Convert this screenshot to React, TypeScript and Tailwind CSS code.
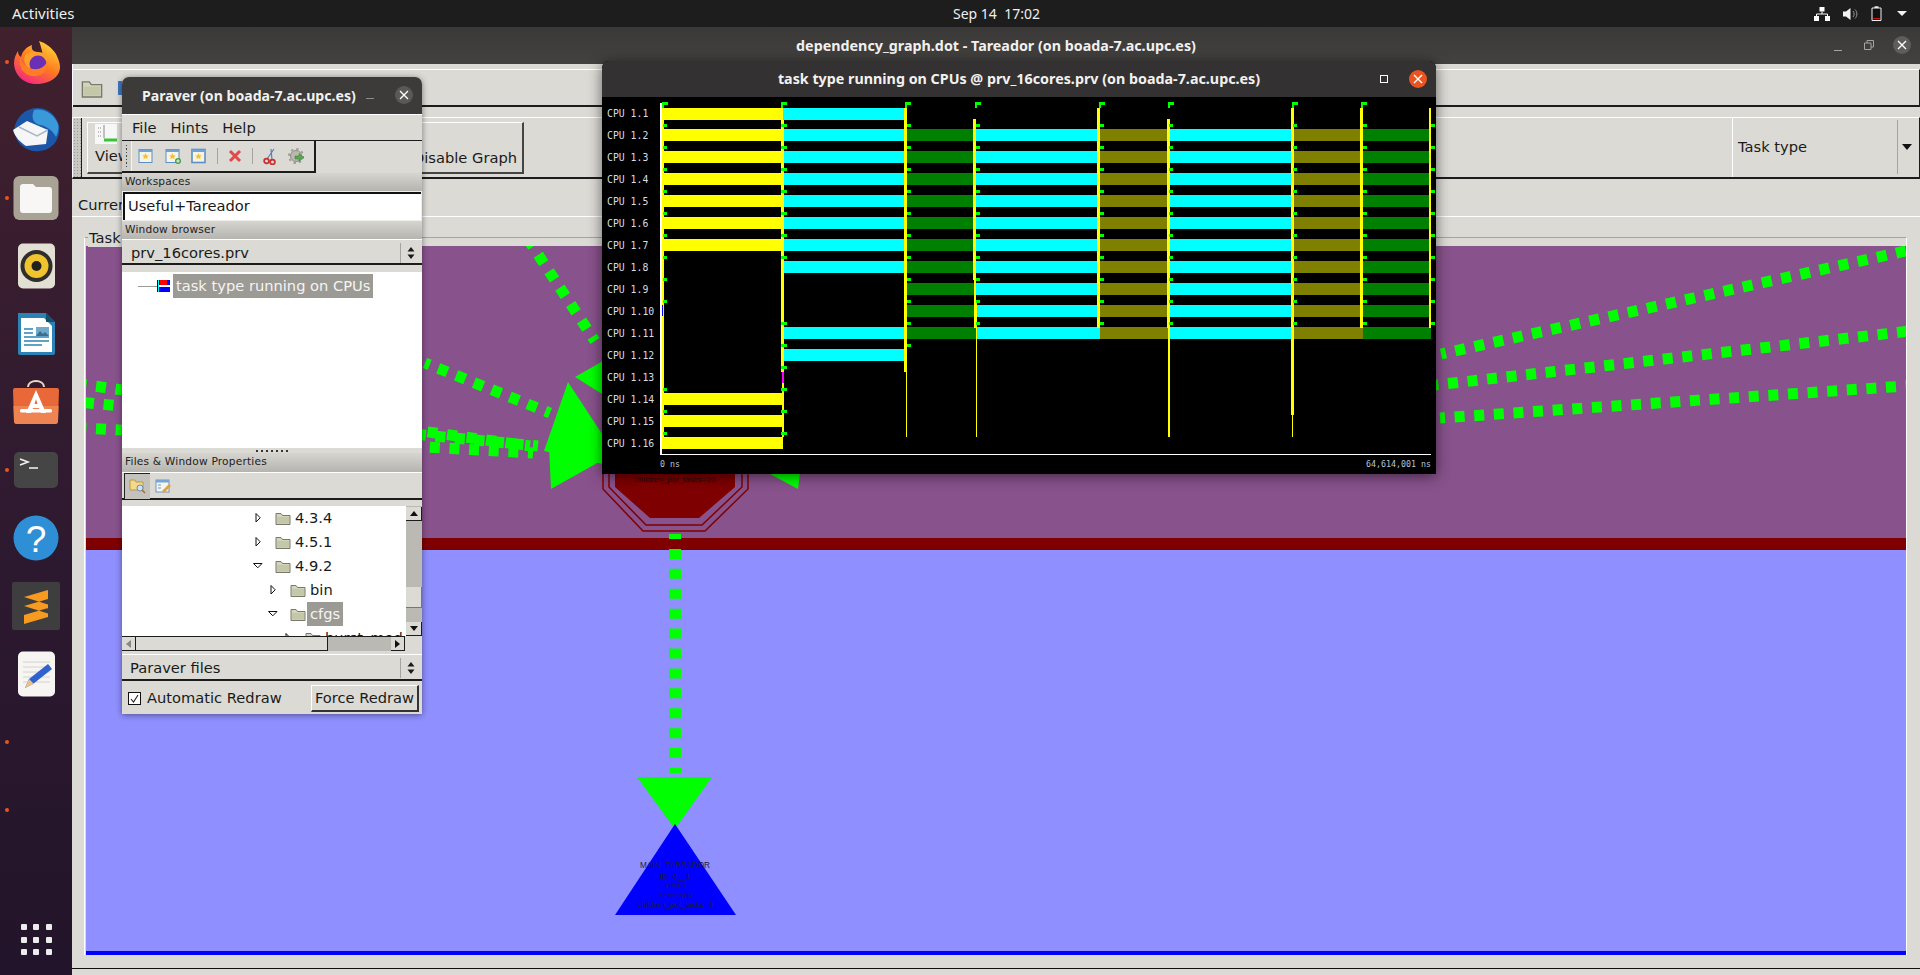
import React from "react";

// ---------- trace data ----------
const YEL = "#ffff00";
const CYA = "#00ffff";
const GRN = "#008000";
const OLV = "#808000";
const FLAG = "#00ff00";

const phases: [number, number, string][] = [
  [662, 783, YEL],
  [783, 905, CYA],
  [907, 974, GRN],
  [976, 1098, CYA],
  [1100, 1167, OLV],
  [1169, 1291, CYA],
  [1293, 1361, OLV],
  [1363, 1430, GRN],
];

// which phases each CPU row has
const rowPhases: number[][] = [
  [0, 1],
  [0, 1, 2, 3, 4, 5, 6, 7],
  [0, 1, 2, 3, 4, 5, 6, 7],
  [0, 1, 2, 3, 4, 5, 6, 7],
  [0, 1, 2, 3, 4, 5, 6, 7],
  [0, 1, 2, 3, 4, 5, 6, 7],
  [0, 1, 2, 3, 4, 5, 6, 7],
  [1, 2, 3, 4, 5, 6, 7],
  [2, 3, 4, 5, 6, 7],
  [2, 3, 4, 5, 6, 7],
  [1, 2, 3, 4, 5, 6, 7],
  [1],
  [],
  [0],
  [0],
  [0],
];

const rowTop = (i: number) => (i === 0 ? 108 : 129 + 22 * (i - 1));

// x, width, from, to
const ticks: [number, number, number, number, string][] = [
  [662, 1.5, 120, 437, YEL],
  [662, 1, 305, 316, "#0000ff"],
  [781, 3, 120, 372, YEL],
  [782, 2, 372, 383, "#ff00ff"],
  [782, 1.5, 383, 437, YEL],
  [904, 3, 108, 372, YEL],
  [906, 1, 372, 437, YEL],
  [973, 3, 119, 280, YEL],
  [974, 1.5, 280, 328, YEL],
  [976, 1, 300, 437, YEL],
  [1097, 3, 108, 328, YEL],
  [1167, 3, 119, 328, YEL],
  [1168, 1.5, 328, 437, YEL],
  [1291, 3, 108, 415, YEL],
  [1292, 1, 415, 437, YEL],
  [1360, 3, 108, 328, YEL],
  [1429, 2, 108, 328, YEL],
];

const flagCols = [663, 781, 907, 976, 1100, 1169, 1293, 1363, 1431];
const flagTopCols = [662, 781, 905, 975, 1099, 1168, 1292, 1361];

function hasFlag(col: number, row: number) {
  if (col === 0) return row < 10 || row > 12;
  if (col === 1) return row !== 8 && row !== 9;
  if (col === 2) return row <= 11;
  return row <= 10;
}

function TraceChart() {
  return (
    <svg width="776" height="359" viewBox="660 97 776 359" className="block" shapeRendering="crispEdges">
      {rowPhases.map((list, r) =>
        list.map((p) => {
          const [a, b, c] = phases[p];
          const start = r >= 2 && r <= 6 && p === 0 ? 661 : a;
          // CPU 1.11 runs on without the gaps
          let end = b;
          if (r === 10 && p >= 2) end = p === 7 ? 1431 : phases[p + 1][0];
          return <rect key={r + "-" + p} x={start} y={rowTop(r)} width={end - start} height={12} fill={c} />;
        })
      )}
      {ticks.map(([x, w, a, b, c], i) => (
        <rect key={i} x={x} y={a} width={w} height={b - a} fill={c} />
      ))}
      {flagTopCols.map((x) => (
        <path key={x} d={`M${x} 108v-6h6v3h-4v3z`} fill={FLAG} />
      ))}
      {flagCols.map((x, c) =>
        rowPhases.map((_, r) =>
          r > 0 && hasFlag(c, r) ? (
            <rect key={c + "_" + r} x={x} y={124 + 22 * (r - 1)} width={c === 1 ? 6 : 4} height={3} fill={FLAG} />
          ) : null
        )
      )}
      <rect x={660} y={103} width={1.5} height={351} fill="#fff" />
      <rect x={660} y={454} width={771} height={1} fill="#fff" />
    </svg>
  );
}

function TraceWindow() {
  const labels = Array.from({ length: 16 }, (_, i) => "CPU 1." + (i + 1));
  return (
    <div className="absolute left-[602px] top-[61px] z-20 flex h-[413px] w-[834px] flex-col overflow-hidden rounded-t-[7px] bg-black shadow-[0_2px_14px_rgba(0,0,0,0.55)]">
      <div className="relative flex h-[36px] items-center justify-center bg-[#333131] font-['Noto_Sans',sans-serif] text-[14.3px] font-bold text-[#f2f1f0]">
        <span>task type running on CPUs @ prv_16cores.prv (on boada-7.ac.upc.es)</span>
        <div className="absolute right-[9px] top-[9px] flex items-center gap-[21px]">
          <div className="h-[8px] w-[8px] border border-white" />
          <div className="flex h-[18px] w-[18px] items-center justify-center rounded-full bg-[#e95420]">
            <svg width="10" height="10" viewBox="0 0 10 10">
              <path d="M1 1l8 8M9 1l-8 8" stroke="#fff" strokeWidth="1.4" />
            </svg>
          </div>
        </div>
      </div>
      <div className="flex">
        <div className="flex w-[58px] flex-col pl-[5px] pt-[6px] font-['DejaVu_Sans_Mono',monospace] text-[9.8px] text-[#d5dde6]">
          {labels.map((l) => (
            <div key={l} className="flex h-[22px] items-center whitespace-nowrap">
              {l}
            </div>
          ))}
        </div>
        <div className="flex flex-col">
          <TraceChart />
          <div className="flex h-[18px] items-center justify-between pb-[1px] pr-[5px] font-['DejaVu_Sans_Mono',monospace] text-[8.3px] text-[#b9c6d4]">
            <span>0 ns</span>
            <span>64,614,001 ns</span>
          </div>
        </div>
      </div>
    </div>
  );
}

// ---------- dependency graph ----------
type EdgeProps = { x1: number; y1: number; x2: number; y2: number; n: number; before?: number; after?: number; w?: number };

// dotted edge, both ends are centres of a square
function Edge({ x1, y1, x2, y2, n, before = 0, after = 0, w = 11 }: EdgeProps) {
  const dx = (x2 - x1) / n;
  const dy = (y2 - y1) / n;
  const pitch = Math.hypot(dx, dy);
  return (
    <line
      x1={x1 - dx * before}
      y1={y1 - dy * before}
      x2={x2 + dx * after}
      y2={y2 + dy * after}
      stroke="#00ff00"
      strokeWidth={w}
      strokeDasharray={`10 ${pitch - 10}`}
      strokeDashoffset={5}
    />
  );
}

function Graph() {
  return (
    <svg width="1820" height="709" viewBox="86 247 1820 709" className="block">
      <rect x="86" y="247" width="1820" height="292" fill="#88528c" />
      <rect x="86" y="539" width="1820" height="12" fill="#7f0000" />
      <rect x="86" y="551" width="1820" height="401" fill="#8f8fff" />
      <rect x="86" y="952" width="1820" height="4" fill="#0000ff" />

      <g fill="none" stroke="#7f0000" strokeWidth="1.5">
        <path d="M603 440V490L643 532H705L748 490V440" />
        <path d="M609 440V488L646 526H702L742 488V440" />
      </g>
      <path d="M615 440V488L650 519H699L735 488V440Z" fill="#7f0000" />
      <text x="675" y="483" textAnchor="middle" fontSize="8" fill="#2a0a0a" fontFamily="Liberation Sans, sans-serif">
        children_pot_tasks=10
      </text>

      <Edge x1={1441} y1={355} x2={1901} y2={253} n={24} after={1} />
      <Edge x1={1453} y1={384} x2={1902} y2={333} n={23} before={1} after={1} />
      <Edge x1={1440} y1={419} x2={1891} y2={388} n={23} after={1} />
      <Edge x1={541} y1={260} x2={595} y2={342} n={5} before={1} />
      <Edge x1={425} y1={364} x2={550} y2={414} n={7} />
      <Edge x1={101} y1={388} x2={530} y2={447} n={22} before={1} />
      <Edge x1={89} y1={404} x2={538} y2={447} n={23} before={1} />
      <Edge x1={101} y1={430} x2={533} y2={454} n={22} before={1} />
      <Edge x1={675} y1={535} x2={675} y2={774} n={12} w={12} />

      <g fill="#00ff00">
        <polygon points="568,383 544,452 625,470" />
        <polygon points="549,448 551,490 640,440" />
        <polygon points="575,378 610,358 610,400" />
        <polygon points="768,474 798,490 800,474" />
        <polygon points="637,778 712,778 675,830" />
      </g>
      <polygon points="675,825 615,916 736,916" fill="#0000ff" />
      <g textAnchor="middle" fontFamily="Liberation Sans, sans-serif" fill="#1c1c3a">
        <text x="675" y="869" fontSize="8.2">MAIN_TAREADOR</text>
        <text x="675" y="880" fontSize="8">ID=0__1</text>
        <text x="675" y="889" fontSize="7.5">inst=0</text>
        <text x="675" y="899" fontSize="7.5">nesting=0</text>
        <text x="675" y="908" fontSize="8">children_pot_tasks=9</text>
      </g>
    </svg>
  );
}

// ---------- small gtk icons ----------
function Folder({ className = "" }: { className?: string }) {
  return (
    <svg viewBox="0 0 16 16" className={className}>
      <path d="M1 3.5h5l1.5 2H15v9H1z" fill="#d3d5bb" stroke="#77796a" strokeWidth="1" />
      <path d="M2 7h12v6.500H2z" fill="#c4c7a8" />
    </svg>
  );
}

function StarWindow({ plus, boxed }: { plus?: boolean; boxed?: boolean }) {
  return (
    <svg width="16" height="16" viewBox="0 0 16 16">
      <rect x="1" y="1.5" width="13" height="13" fill="#f8f4e4" stroke="#5a8fc9" strokeWidth={boxed ? 1.6 : 1} />
      <rect x="1" y="1.5" width="13" height="2.500" fill="#6fa2d8" />
      <path d="M7.500 5l1 2.200 2.300.2-1.700 1.600.5 2.300-2.100-1.200-2.100 1.200.5-2.300-1.700-1.600 2.300-.2z" fill="#f2c230" />
      {plus && <circle cx="13" cy="13" r="3" fill="#4e9a4e" />}
      {plus && <path d="M13 11.200v3.600M11.200 13h3.600" stroke="#fff" strokeWidth="0.9" />}
    </svg>
  );
}

function Spinner() {
  return (
    <svg width="8" height="14" viewBox="0 0 8 14">
      <path d="M4 1l3.500 4.500h-7zM4 13l3.500-4.500h-7z" fill="#1a1a1a" />
    </svg>
  );
}

function TreeArrow({ open }: { open?: boolean }) {
  return (
    <svg width="12" height="12" viewBox="0 0 12 12" className="shrink-0">
      {open ? (
        <path d="M1.500 3.500h8.500L5.800 7.800z" fill="#fff" stroke="#111" />
      ) : (
        <path d="M4 1.500v8.500l4.200-4.200z" fill="#fff" stroke="#111" />
      )}
    </svg>
  );
}

function HeaderStrip({ text, className }: { text: string; className: string }) {
  return (
    <div className={"flex items-center bg-linear-to-b from-[#d6d5d0] to-[#b5b4af] pl-[3px] text-[10.6px] tracking-[0.2px] text-[#222] " + className}>
      {text}
    </div>
  );
}

function ParaverWindow() {
  return (
    <div className="absolute left-[122px] top-[77px] z-10 flex w-[300px] flex-col overflow-hidden rounded-t-[7px] bg-[#dbdad5] text-[14.67px] text-[#1a1a1a] shadow-[0_1px_6px_rgba(0,0,0,0.45)]">
      <div className="relative flex h-[37px] items-center bg-[#3c3b39] pl-[20px] font-['Noto_Sans',sans-serif] text-[14.1px] font-bold text-[#f2f1f0]">
        Paraver (on boada-7.ac.upc.es)
        <div className="absolute right-[9px] top-[9px] flex h-[18px] w-[18px] items-center justify-center rounded-full bg-[#5a5957]">
          <svg width="10" height="10" viewBox="0 0 10 10">
            <path d="M1 1l8 8M9 1l-8 8" stroke="#fff" strokeWidth="1.3" />
          </svg>
        </div>
        <div className="absolute left-[244px] top-[21px] h-px w-[8px] bg-[#8d8c89]" />
      </div>

      <div className="flex h-[27px] items-center gap-[14px] border-t border-b border-t-white border-b-[#1c1c1c] pl-[10px] pt-[1px]">
        <span>File</span>
        <span>Hints</span>
        <span>Help</span>
      </div>

      <div className="flex h-[32px] w-[194px] items-center border-r-2 border-b-2 border-[#1c1c1c] bg-[#dbdad5]">
        <div className="flex h-full w-[10px] flex-col items-center justify-center gap-[2px] border-r border-[#f5f5f2] bg-[#cfcec9]">
          {[0, 1, 2, 3, 4, 5, 6].map((i) => (
            <div key={i} className="h-[1.5px] w-[1.5px] bg-[#444]" />
          ))}
        </div>
        <div className="ml-[6px] flex items-center">
          <StarWindow />
          <div className="w-[11px]" />
          <StarWindow plus />
          <div className="w-[10px]" />
          <StarWindow boxed />
          <div className="mx-[10px] h-[16px] w-px bg-[#a5a49f]" />
          <svg width="14" height="14" viewBox="0 0 14 14">
            <path d="M2 2l10 10M12 2L2 12" stroke="#e04a4a" strokeWidth="3" />
          </svg>
          <div className="mx-[10px] h-[16px] w-px bg-[#a5a49f]" />
          <svg width="15" height="17" viewBox="0 0 15 17">
            <path d="M4 11L11 1M9 12L8 1" stroke="#5a7fb0" strokeWidth="1.2" />
            <circle cx="3.500" cy="13" r="2.400" fill="none" stroke="#c92f2f" strokeWidth="1.700" />
            <circle cx="9.500" cy="14" r="2.400" fill="none" stroke="#c92f2f" strokeWidth="1.700" />
          </svg>
          <div className="w-[10px]" />
          <svg width="17" height="17" viewBox="0 0 17 17">
            <circle cx="8" cy="8" r="5.500" fill="#b9b9b0" stroke="#8e8e85" />
            <circle cx="8" cy="8" r="7" fill="none" stroke="#a0a097" strokeWidth="2" strokeDasharray="2.500 3" />
            <path d="M7 8h4V5.500l5 4-5 4V11H7z" fill="#58a552" stroke="#3e7d3a" strokeWidth="0.5" />
          </svg>
        </div>
      </div>

      <HeaderStrip text="Workspaces" className="h-[18px]" />
      <div className="h-[30px] bg-[#eeede9] p-px">
        <div className="flex h-full items-center border-t-[2px] border-l-[2px] border-t-[#111] border-l-[#111] bg-white pb-[2px] pl-[3px]">
          Useful+Tareador
        </div>
      </div>
      <HeaderStrip text="Window browser" className="h-[18px]" />
      <div className="flex h-[26px] items-center justify-between border-t border-b-2 border-t-white border-b-[#1c1c1c] pl-[9px] pr-[7px] pt-[2px]">
        <span>prv_16cores.prv</span>
        <div className="flex items-center gap-[6px]">
          <div className="h-[20px] w-px bg-[#a5a49f]" />
          <Spinner />
        </div>
      </div>
      <div className="h-[7px]" />

      <div className="h-[176px] bg-white pt-[2px]">
        <div className="flex h-[24px] items-center pl-[16px]">
          <div className="h-px w-[19px] bg-[#9a9a96]" />
          <svg width="13" height="12" viewBox="0 0 13 12" className="shrink-0" shapeRendering="crispEdges">
            <rect width="13" height="12" fill="#0000ff" />
            <rect width="2" height="12" fill="#00ffff" />
            <rect x="3" y="0" width="7" height="5" fill="#ff0000" />
            <rect x="2" y="5" width="11" height="2" fill="#fff" />
            <rect x="0" y="0" width="1" height="12" fill="#111" />
          </svg>
          <div className="ml-[3px] flex h-full items-center bg-[#9c9a94] px-[3px] whitespace-nowrap text-[#f4f4f2]">
            task type running on CPUs
          </div>
        </div>
      </div>
      <div className="flex h-[5px] items-center justify-center gap-[3px]">
        {[0, 1, 2, 3, 4, 5, 6].map((i) => (
          <div key={i} className="h-[2px] w-[2px] bg-[#333]" />
        ))}
      </div>

      <HeaderStrip text="Files & Window Properties" className="h-[19px] pb-[2px]" />
      <div className="flex h-[28px] items-center border-t border-b-2 border-t-white border-b-[#1c1c1c] pl-[2px]">
        <div className="flex h-[26px] w-[26px] items-center justify-center border-t border-l border-t-[#222] border-l-[#222] bg-[#c3c2bd]">
          <svg width="17" height="16" viewBox="0 0 17 16">
            <path d="M1 2h5l1 2h7v8H1z" fill="#f3d98c" stroke="#b89a4a" />
            <circle cx="11" cy="10" r="3" fill="#cfe3f5" stroke="#6c8cb0" />
            <path d="M13 12l3 3" stroke="#b0672c" strokeWidth="1.5" />
          </svg>
        </div>
        <svg width="17" height="16" viewBox="0 0 17 16" className="ml-[5px]">
          <rect x="1" y="2" width="13" height="12" fill="#f5f5f0" stroke="#6f96c6" />
          <rect x="1" y="2" width="13" height="2.500" fill="#7aa4d6" />
          <path d="M3 7h3M3 10h3" stroke="#6f96c6" />
          <path d="M7 13l7-7 2 2-7 7z" fill="#e2a23c" />
        </svg>
      </div>
      <div className="h-[6px]" />

      <div className="flex h-[130px]">
        <div className="flex-1 overflow-hidden bg-white">
          <div className="flex h-[24px] items-center pl-[130px]">
            <TreeArrow />
            <Folder className="ml-[11px] h-[16px] w-[16px] shrink-0" />
            <span className="ml-[4px]">4.3.4</span>
          </div>
          <div className="flex h-[24px] items-center pl-[130px]">
            <TreeArrow />
            <Folder className="ml-[11px] h-[16px] w-[16px] shrink-0" />
            <span className="ml-[4px]">4.5.1</span>
          </div>
          <div className="flex h-[24px] items-center pl-[130px]">
            <TreeArrow open />
            <Folder className="ml-[11px] h-[16px] w-[16px] shrink-0" />
            <span className="ml-[4px]">4.9.2</span>
          </div>
          <div className="flex h-[24px] items-center pl-[145px]">
            <TreeArrow />
            <Folder className="ml-[11px] h-[16px] w-[16px] shrink-0" />
            <span className="ml-[4px]">bin</span>
          </div>
          <div className="flex h-[24px] items-center pl-[145px]">
            <TreeArrow open />
            <Folder className="ml-[11px] h-[16px] w-[16px] shrink-0" />
            <span className="ml-[1px] flex h-full items-center bg-[#9c9a94] px-[3px] text-[#f4f4f2]">cfgs</span>
          </div>
          <div className="flex h-[24px] items-center pl-[160px]">
            <TreeArrow />
            <Folder className="ml-[11px] h-[16px] w-[16px] shrink-0" />
            <span className="ml-[4px] whitespace-nowrap">burst_mod</span>
          </div>
        </div>
        <div className="flex w-[16px] flex-col bg-[#bab9b4]">
          <div className="mt-[1px] flex h-[14px] items-center justify-center border-r border-b border-[#1c1c1c] border-t-white bg-[#dbdad5]">
            <div className="h-0 w-0 border-x-[4px] border-b-[5px] border-x-transparent border-b-[#111]" />
          </div>
          <div className="mt-[66px] h-[21px] border-r border-b border-[#77766f] bg-[#dbdad5]" />
          <div className="mt-auto flex h-[14px] items-center justify-center border-r border-b border-[#1c1c1c] bg-[#dbdad5]">
            <div className="h-0 w-0 border-x-[4px] border-t-[5px] border-x-transparent border-t-[#111]" />
          </div>
        </div>
      </div>
      <div className="flex h-[15px] w-[283px] border-t border-[#1c1c1c] bg-[#bab9b4]">
        <div className="flex w-[14px] items-center justify-center border-r border-b border-[#1c1c1c] bg-[#dbdad5]">
          <div className="h-0 w-0 border-y-[4px] border-r-[5px] border-y-transparent border-r-[#888]" />
        </div>
        <div className="w-[192px] border-r border-b border-[#1c1c1c] bg-[#dbdad5]" />
        <div className="ml-auto flex w-[14px] items-center justify-center border-r border-b border-[#1c1c1c] bg-[#dbdad5]">
          <div className="h-0 w-0 border-y-[4px] border-l-[5px] border-y-transparent border-l-[#111]" />
        </div>
      </div>
      <div className="mt-[3px] flex h-[27px] items-center justify-between border-t border-b-2 border-t-white border-b-[#1c1c1c] pl-[8px] pr-[7px] pt-[2px]">
        <span>Paraver files</span>
        <div className="flex items-center gap-[6px]">
          <div className="h-[20px] w-px bg-[#a5a49f]" />
          <Spinner />
        </div>
      </div>
      <div className="flex h-[33px] items-center pl-[6px] pr-[3px] pt-[1px]">
        <div className="flex h-[13px] w-[13px] items-center justify-center border border-[#111] bg-white">
          <svg width="9" height="9" viewBox="0 0 9 9">
            <path d="M1 5l2.500 3L8 1" fill="none" stroke="#222" strokeWidth="1.1" />
          </svg>
        </div>
        <span className="ml-[6px]">Automatic Redraw</span>
        <div className="ml-auto flex h-[27px] w-[108px] items-center justify-center border-t border-l border-r-2 border-b-2 border-t-white border-l-white border-r-[#333] border-b-[#333] whitespace-nowrap">
          Force Redraw
        </div>
      </div>
    </div>
  );
}

// ---------- dock ----------
function DockIcon({ name }: { name: string }) {
  switch (name) {
    case "firefox":
      return (
        <svg width="48" height="48" viewBox="0 0 48 48">
          <defs>
            <linearGradient id="ffa" x1="0.8" y1="0" x2="0.2" y2="1">
              <stop offset="0" stopColor="#ffd93a" />
              <stop offset="0.5" stopColor="#ff7a1f" />
              <stop offset="1" stopColor="#f3208a" />
            </linearGradient>
          </defs>
          <path d="M24 46C11 46 2 36 2 25c0-5 2-9 4-12 0 3 1 5 3 6 1-5 5-10 11-12-1 4 1 6 4 7 4 1 7 3 7 3s-2-9-4-14c7 2 13 7 17 13 2 4 4 9 4 13 0 10-10 17-24 17z" fill="url(#ffa)" />
          <path d="M14 16c5-3 14-3 19 0 3 3 4 8 2 12l-19 2c-4-4-5-10-2-14z" fill="#ffa028" />
          <circle cx="26" cy="26" r="8.500" fill="#6b2fb5" />
          <path d="M8 20c3 8 10 12 18 11 5-1 9-5 9-9 2 5 0 11-5 14-7 4-16 2-20-4-2-4-3-8-2-12z" fill="#ff7d24" />
        </svg>
      );
    case "thunderbird":
      return (
        <svg width="48" height="48" viewBox="0 0 48 48">
          <path d="M2 24C4 10 14 2 26 2c10 0 18 7 21 17 1 6 0 14-6 20-5 5-12 7-19 6-8-1-15-6-18-13z" fill="#1c56a8" />
          <path d="M22 4c10-2 20 4 24 14 1 4 0 9-2 13-3-6-9-11-16-12-5-1-10-6-6-15z" fill="#3a9ad9" />
          <path d="M1 24l14-9 21 9-2 14-20 2C8 36 3 31 1 24z" fill="#f6f6f6" />
          <path d="M7 21l18 9 11-6" fill="none" stroke="#a9b7c9" strokeWidth="1.5" />
        </svg>
      );
    case "files":
      return (
        <svg width="48" height="48" viewBox="0 0 48 48">
          <rect x="1.500" y="2" width="45" height="44" rx="6" fill="#a8a395" />
          <path d="M8 13a3 3 0 013-3h10l3 3h13a3 3 0 013 3v20a3 3 0 01-3 3H11a3 3 0 01-3-3z" fill="#f8f7f5" />
        </svg>
      );
    case "rhythmbox":
      return (
        <svg width="48" height="48" viewBox="0 0 48 48">
          <rect x="6" y="1.500" width="37" height="45" rx="5" fill="#e2dfd5" />
          <circle cx="24.500" cy="24" r="16" fill="#2f2e2b" />
          <circle cx="24.500" cy="24" r="12" fill="#f0c42f" />
          <circle cx="24.500" cy="24" r="5" fill="#22211f" />
        </svg>
      );
    case "writer":
      return (
        <svg width="48" height="48" viewBox="0 0 48 48">
          <path d="M6 3h28l9 9v31a2 2 0 01-2 2H8a2 2 0 01-2-2z" fill="#2c82b5" />
          <path d="M9 8h23l8 8v26H9z" fill="#fff" />
          <path d="M34 3l9 9h-9z" fill="#14506f" />
          <rect x="24" y="17" width="13" height="9" fill="#6fa9cc" />
          <path d="M24 26l4-5 3 3 2-2 4 4z" fill="#3d6d8a" />
          <path d="M12 19h9M12 23h9M12 27h25M12 31h25M12 35h18" stroke="#2c82b5" strokeWidth="1.6" />
        </svg>
      );
    case "software":
      return (
        <svg width="48" height="48" viewBox="0 0 48 48">
          <path d="M16 9c0-8 16-8 16 0" fill="none" stroke="#e8d9c4" strokeWidth="2" />
          <path d="M3 10h42a2 2 0 012 2l-1 31a3 3 0 01-3 3H5a3 3 0 01-3-3L1 12a2 2 0 012-2z" fill="#e9683a" />
          <path d="M1.500 28h45l-.5 15a3 3 0 01-3 3H5a3 3 0 01-3-3z" fill="#ef8453" />
          <path d="M24 12l-10 23h5l2-5h6l2 5h5zM22.500 26L24 21l1.500 5z" fill="#fff" />
          <rect x="8" y="31" width="32" height="3.500" rx="1.500" fill="#fff" />
        </svg>
      );
    case "terminal":
      return (
        <svg width="48" height="48" viewBox="0 0 48 48">
          <rect x="2" y="6" width="44" height="36" rx="5" fill="#454545" />
          <path d="M8 13l8 3-8 3M17 22h9" fill="none" stroke="#f2f2f2" strokeWidth="1.6" />
        </svg>
      );
    case "help":
      return (
        <svg width="48" height="48" viewBox="0 0 48 48">
          <circle cx="24" cy="24" r="22.500" fill="#2f8fd6" />
          <text x="24" y="38" textAnchor="middle" fontSize="37" fontFamily="Liberation Sans, sans-serif" fill="#fff">
            ?
          </text>
        </svg>
      );
    case "sublime":
      return (
        <svg width="48" height="48" viewBox="0 0 48 48">
          <rect y="0" width="48" height="48" rx="2" fill="#3e3e3e" />
          <path d="M12 15l24-7v9l-24 7zM12 24l24 7.500v-9L12 15zM12 33l24-7v9l-24 7z" fill="#f79a1f" />
        </svg>
      );
    default:
      return (
        <svg width="48" height="48" viewBox="0 0 48 48">
          <rect x="6" y="1.500" width="37" height="45" rx="5" fill="#f6f5f2" />
          <path d="M11 12h27M11 17h27M11 22h27M11 27h27M11 32h27" stroke="#d4d2cc" />
          <path d="M13 38l4-9 19-15 4 5-19 15z" fill="#2f62cf" />
          <path d="M13 38l4-9 5 5z" fill="#e8c08f" />
        </svg>
      );
  }
}

const dockApps: { name: string; dot?: boolean }[] = [
  { name: "firefox", dot: true },
  { name: "thunderbird" },
  { name: "files", dot: true },
  { name: "rhythmbox" },
  { name: "writer" },
  { name: "software" },
  { name: "terminal", dot: true },
  { name: "help" },
  { name: "sublime" },
  { name: "editor" },
];

function Dock() {
  return (
    <div className="flex w-[72px] shrink-0 flex-col items-center bg-linear-to-b from-[#41202d] via-[#2f1a30] to-[#22142a] pt-px">
      {dockApps.map((a) => (
        <div key={a.name} className="relative flex h-[68px] w-full items-center justify-center">
          <DockIcon name={a.name} />
          {a.dot && <div className="absolute left-[5px] top-[32px] h-[4px] w-[4px] rounded-full bg-[#e95420]" />}
        </div>
      ))}
      <div className="relative h-[68px] w-full">
        <div className="absolute left-[5px] top-[32px] h-[4px] w-[4px] rounded-full bg-[#e95420]" />
      </div>
      <div className="relative h-[68px] w-full">
        <div className="absolute left-[5px] top-[32px] h-[4px] w-[4px] rounded-full bg-[#e95420]" />
      </div>
      <div className="mt-auto mb-[20px] grid grid-cols-3 gap-[6.5px]">
        {[0, 1, 2, 3, 4, 5, 6, 7, 8].map((i) => (
          <div key={i} className="h-[6px] w-[6px] rounded-[1px] bg-[#ececec]" />
        ))}
      </div>
    </div>
  );
}

// ---------- main tareador window ----------
function TareadorWindow() {
  return (
    <div className="flex min-w-0 flex-1 flex-col bg-[#dbdad5] text-[14.67px] text-[#1a1a1a]">
      <div className="relative flex h-[37px] items-center justify-center bg-linear-to-b from-[#3a3938] to-[#434240] font-['Noto_Sans',sans-serif] text-[14.3px] font-bold text-[#f2f1f0]">
        <span>dependency_graph.dot - Tareador (on boada-7.ac.upc.es)</span>
        <div className="absolute right-[9px] top-[9px] flex items-center">
          <div className="mt-[10px] h-px w-[8px] bg-[#a5a4a1]" />
          <svg width="10" height="10" viewBox="0 0 10 10" className="ml-[22px]">
            <path d="M0.500 3h6.500v6.500H0.500zM3 3V0.500h6.500V7H7" fill="none" stroke="#a5a4a1" />
          </svg>
          <div className="ml-[19px] flex h-[18px] w-[18px] items-center justify-center rounded-full bg-[#5e5d5b]">
            <svg width="10" height="10" viewBox="0 0 10 10">
              <path d="M1 1l8 8M9 1l-8 8" stroke="#fff" strokeWidth="1.3" />
            </svg>
          </div>
        </div>
      </div>

      <div className="border-l border-white pt-[5px]">
        <div className="flex h-[38px] items-center gap-[13px] border-t border-r border-b-2 border-t-white border-r-[#1c1c1c] border-b-[#1c1c1c] pl-[8px]">
          <Folder className="h-[22px] w-[22px]" />
          <svg width="18" height="20" viewBox="0 0 18 20">
            <path d="M2 3h12v14H2z" fill="#3f78c4" />
          </svg>
        </div>
      </div>

      <div className="mt-[10px] flex h-[62px] border-t border-r border-b-2 border-l border-t-white border-r-[#1c1c1c] border-b-[#1c1c1c] border-l-white">
        <div className="w-[8px] bg-[#c9c8c3] bg-[radial-gradient(#9a9994_1px,transparent_1px)] bg-size-[3px_3px]" />
        <div className="w-px bg-[#1c1c1c]" />
        <div className="flex items-start gap-[20px] pl-[5px] pt-[4px]">
          <div className="flex h-[52px] w-[110px] flex-col border-t border-l border-r-2 border-b-2 border-t-white border-l-white border-r-[#444] border-b-[#444] pl-[7px] pt-[1px]">
            <svg width="22" height="20" viewBox="0 0 22 20">
              <rect width="22" height="20" fill="#f7f7f7" />
              <path d="M3 4h4M3 8h4M3 12h4" stroke="#888" strokeDasharray="1 1" />
              <path d="M9 1v13" stroke="#888" />
              <path d="M9 16h13" stroke="#37c437" strokeWidth="3" />
            </svg>
            <span className="mt-[1px] leading-[22px]">View</span>
          </div>
          <div className="flex h-[52px] w-[307px] items-end justify-end border-t border-l border-r-2 border-b-2 border-t-white border-l-white border-r-[#444] border-b-[#444] pb-[3px] pr-[5px]">
            Disable Graph
          </div>
        </div>
        <div className="ml-auto flex h-full w-[187px] shrink-0 items-center border-l border-white pb-[1px] pl-[5px]">
          <span className="w-[159px] whitespace-nowrap">Task type</span>
          <div className="mr-[4px] h-[54px] w-px bg-[#a5a49f]" />
          <div className="h-0 w-0 border-x-[5px] border-t-[6px] border-x-transparent border-t-[#111]" />
        </div>
      </div>

      <div className="flex h-[38px] items-end border-b border-white pl-[6px]">
        <span>Current</span>
      </div>
      <div className="relative mt-[20px] ml-[12px] mr-[13px] border-t border-l border-r border-t-[#a5a49f] border-l-white border-r-white pt-[8px] pl-px">
        <span className="absolute -top-[9px] left-[3px] bg-[#dbdad5] px-px leading-[18px]">Task</span>
        <Graph />
      </div>
      <div className="mt-[13px] h-px bg-[#111]" />
    </div>
  );
}

export default function App() {
  return (
    <div className="relative flex h-[975px] w-[1920px] flex-col overflow-hidden font-['DejaVu_Sans',sans-serif]">
      <div className="relative flex h-[27px] shrink-0 items-center justify-between bg-[#1d1d1d] px-[12px] font-['Noto_Sans',sans-serif] text-[14px] text-[#efefef]">
        <span className="text-[15px]">Activities</span>
        <span className="absolute left-[953px] whitespace-pre">Sep 14  17:02</span>
        <div className="flex items-center gap-[13px] pr-[1px]">
          <svg width="16" height="14" viewBox="0 0 16 14">
            <path d="M5.500 0h5v4.500h-5zM0 9h5v5H0zM11 9h5v5h-5z" fill="#fff" />
            <path d="M8 4.500v2.500M2.500 9V7h11v2" fill="none" stroke="#fff" />
          </svg>
          <svg width="15" height="14" viewBox="0 0 15 14">
            <path d="M0 4.500h3L7.500 1v12L3 9.500H0z" fill="#f2f2f2" />
            <path d="M10 4c1.500 1.500 1.500 4.500 0 6M12 2.500c2.500 2.500 2.500 6.500 0 9" fill="none" stroke="#9a9a9a" />
          </svg>
          <svg width="11" height="15" viewBox="0 0 11 15">
            <path d="M1 2h9v12.500H1z" fill="#111" stroke="#f2f2f2" strokeWidth="1" />
            <rect x="3.500" y="0.300" width="4" height="1.700" fill="#f2f2f2" />
            <rect x="2" y="12" width="7" height="1" fill="#d01010" />
          </svg>
          <div className="ml-[2px] h-0 w-0 border-x-[5px] border-t-[5px] border-x-transparent border-t-[#f2f2f2]" />
        </div>
      </div>
      <div className="flex min-h-0 flex-1">
        <Dock />
        <TareadorWindow />
      </div>
      <ParaverWindow />
      <TraceWindow />
    </div>
  );
}
